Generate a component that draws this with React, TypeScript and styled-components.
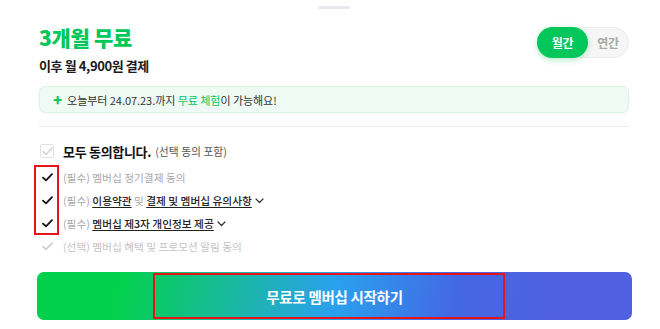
import React from "react";
import styled, { createGlobalStyle } from "styled-components";

const Global = createGlobalStyle`
  html, body { margin: 0; padding: 0; background: #fff; }
  body { font-family: "Noto Sans CJK KR", "Noto Sans", sans-serif; color: #222; }
  * { box-sizing: border-box; }
`;

const Sheet = styled.div`
  width: 660px;
  height: 329px;
  padding: 6px 31px 0 39px;
  display: flex;
  flex-direction: column;
`;

const Handle = styled.div`
  align-self: center;
  width: 32px;
  height: 3px;
  border-radius: 2px;
  background: #e8e8ef;
`;

const Header = styled.div`
  margin-top: 15px;
  display: flex;
  justify-content: space-between;
  align-items: flex-start;
`;

const TitleBlock = styled.div`
  display: flex;
  flex-direction: column;
`;

const Title = styled.h1`
  margin: 0;
  font-size: 21px;
  line-height: 26px;
  font-weight: 800;
  color: #03c75a;
  letter-spacing: -0.3px;
`;

const Subtitle = styled.div`
  margin-top: 8px;
  font-size: 13px;
  line-height: 16px;
  font-weight: 700;
  color: #1a1a1a;
  letter-spacing: -0.4px;
`;

const Toggle = styled.div`
  margin-top: 3px;
  width: 92px;
  height: 31px;
  border-radius: 16px;
  background: #f6f6f6;
  border: 1px solid #ececec;
  display: flex;
  align-items: center;
`;

const ToggleItem = styled.div<{ $active?: boolean }>`
  width: ${(p) => (p.$active ? "51px" : "40px")};
  height: ${(p) => (p.$active ? "31px" : "29px")};
  margin: ${(p) => (p.$active ? "-1px 0 -1px -1px" : "0")};
  border-radius: 16px;
  display: flex;
  align-items: center;
  justify-content: center;
  font-size: 12px;
  font-weight: 700;
  letter-spacing: -0.3px;
  color: ${(p) => (p.$active ? "#fff" : "#a8a8a8")};
  background: ${(p) => (p.$active ? "#03c75a" : "transparent")};
  box-shadow: ${(p) => (p.$active ? "0 2px 6px rgba(3, 199, 90, 0.3)" : "none")};
`;

const Notice = styled.div`
  margin-top: 12px;
  height: 27px;
  border-radius: 6px;
  background: #f0faf4;
  border: 1px solid #d8f3e2;
  display: flex;
  align-items: center;
  padding-left: 13px;
  font-size: 11px;
  color: #333;
  letter-spacing: -0.05px;
`;

const Plus = styled.span`
  color: #03c75a;
  font-size: 15px;
  font-weight: 800;
  margin-right: 5px;
  line-height: 1;
`;

const Green = styled.span`
  color: #03c75a;
`;

const Divider = styled.div`
  margin-top: 13px;
  height: 1px;
  background: #ececec;
`;

const AgreeList = styled.div`
  position: relative;
  margin-top: 16px;
  display: flex;
  flex-direction: column;
`;

const AllRow = styled.div`
  display: flex;
  align-items: center;
  height: 16px;
  margin-bottom: 7px;
`;

const Box = styled.div`
  width: 14px;
  height: 14px;
  border: 1px solid #e2e2e2;
  border-radius: 2px;
  margin-left: 1px;
  display: flex;
  align-items: center;
  justify-content: center;
`;

const AllLabel = styled.span`
  margin-left: 9px;
  font-size: 13px;
  font-weight: 700;
  color: #111;
  letter-spacing: -0.3px;
`;

const AllNote = styled.span`
  margin-left: 4px;
  font-size: 10.8px;
  color: #555;
`;

const Row = styled.div`
  display: flex;
  align-items: center;
  height: 23px;
`;

const CheckSlot = styled.div`
  width: 24px;
  display: flex;
  padding-left: 3px;
`;

const RowText = styled.span<{ $muted?: boolean }>`
  font-size: 10.7px;
  color: ${(p) => (p.$muted ? "#c4c4c4" : "#a9a9a9")};
  display: flex;
  align-items: center;
  white-space: pre;
`;

const Link = styled.span`
  color: #222;
  font-weight: 500;
  text-decoration: underline;
  text-underline-offset: 2px;
`;

const Chevron = styled.svg`
  margin-left: 3px;
`;

const Highlight = styled.div`
  position: absolute;
  left: -5px;
  top: 22px;
  width: 25px;
  height: 70px;
  border: 2px solid #e8141a;
  pointer-events: none;
`;

const CTA = styled.button`
  position: relative;
  margin: 14px -3px 0 -2px;
  height: 48px;
  border: none;
  border-radius: 7px;
  background: linear-gradient(100deg, #02d04c 14%, #14c08a 28%, #2aa1ee 50%, #4468e4 70%, #5060e0 88%);
  color: #fff;
  font-family: "Noto Sans CJK KR", sans-serif;
  font-size: 14.5px;
  font-weight: 700;
  letter-spacing: -0.3px;
  cursor: pointer;
`;

const CTAHighlight = styled.div`
  position: absolute;
  left: 116px;
  top: 1px;
  width: 352px;
  height: 46px;
  border: 2px solid #e8141a;
  pointer-events: none;
`;

const Check = ({ color }: { color: string }) => (
  <svg width="11" height="9" viewBox="0 0 11 9">
    <path d="M1 4.6 L4 7.4 L10 1.2" fill="none" stroke={color} strokeWidth="1.8" strokeLinecap="round" strokeLinejoin="round" />
  </svg>
);

const Down = () => (
  <Chevron width="9" height="6" viewBox="0 0 9 6">
    <path d="M1 1 L4.5 4.5 L8 1" fill="none" stroke="#333" strokeWidth="1.2" strokeLinecap="round" strokeLinejoin="round" />
  </Chevron>
);

export default function App() {
  return (
    <>
      <Global />
      <Sheet>
        <Handle />
        <Header>
          <TitleBlock>
            <Title>3개월 무료</Title>
            <Subtitle>이후 월 4,900원 결제</Subtitle>
          </TitleBlock>
          <Toggle>
            <ToggleItem $active>월간</ToggleItem>
            <ToggleItem>연간</ToggleItem>
          </Toggle>
        </Header>
        <Notice>
          <Plus>+</Plus>
          오늘부터 24.07.23.까지&nbsp;<Green>무료 체험</Green>이 가능해요!
        </Notice>
        <Divider />
        <AgreeList>
          <AllRow>
            <Box>
              <Check color="#d6d6d6" />
            </Box>
            <AllLabel>모두 동의합니다.</AllLabel>
            <AllNote>(선택 동의 포함)</AllNote>
          </AllRow>
          <Row>
            <CheckSlot>
              <Check color="#111" />
            </CheckSlot>
            <RowText>(필수) 멤버십 정기결제 동의</RowText>
          </Row>
          <Row>
            <CheckSlot>
              <Check color="#111" />
            </CheckSlot>
            <RowText>
              (필수) <Link>이용약관</Link> 및 <Link>결제 및 멤버십 유의사항</Link>
              <Down />
            </RowText>
          </Row>
          <Row>
            <CheckSlot>
              <Check color="#111" />
            </CheckSlot>
            <RowText>
              (필수) <Link>멤버십 제3자 개인정보 제공</Link>
              <Down />
            </RowText>
          </Row>
          <Row>
            <CheckSlot>
              <Check color="#cfcfcf" />
            </CheckSlot>
            <RowText $muted>(선택) 멤버십 혜택 및 프로모션 알림 동의</RowText>
          </Row>
          <Highlight />
        </AgreeList>
        <CTA>
          무료로 멤버십 시작하기
          <CTAHighlight />
        </CTA>
      </Sheet>
    </>
  );
}
